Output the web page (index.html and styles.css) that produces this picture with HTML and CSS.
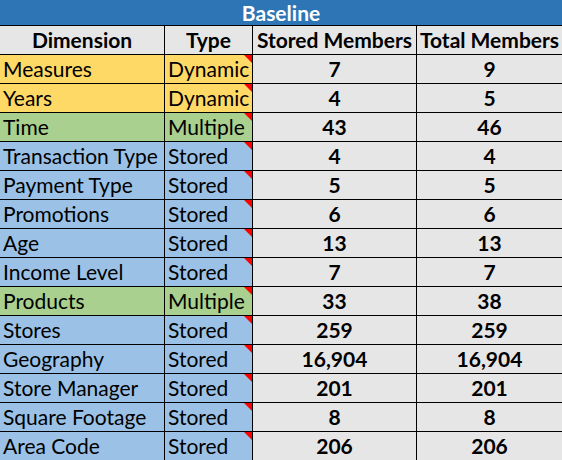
FILE: index.html
```html
<!DOCTYPE html>
<html>
<head>
<meta charset="utf-8">
<link rel="stylesheet" href="styles.css">
</head>
<body>
<div class="sheet">
  <div class="title">Baseline</div>
  <div class="cell head">Dimension</div>
  <div class="cell head">Type</div>
  <div class="cell head">Stored Members</div>
  <div class="cell head">Total Members</div>

  <div class="cell dim dyn">Measures</div><div class="cell type dyn">Dynamic</div><div class="cell num">7</div><div class="cell num">9</div>
  <div class="cell dim dyn">Years</div><div class="cell type dyn">Dynamic</div><div class="cell num">4</div><div class="cell num">5</div>
  <div class="cell dim mul">Time</div><div class="cell type mul">Multiple</div><div class="cell num">43</div><div class="cell num">46</div>
  <div class="cell dim sto">Transaction Type</div><div class="cell type sto">Stored</div><div class="cell num">4</div><div class="cell num">4</div>
  <div class="cell dim sto">Payment Type</div><div class="cell type sto">Stored</div><div class="cell num">5</div><div class="cell num">5</div>
  <div class="cell dim sto">Promotions</div><div class="cell type sto">Stored</div><div class="cell num">6</div><div class="cell num">6</div>
  <div class="cell dim sto">Age</div><div class="cell type sto">Stored</div><div class="cell num">13</div><div class="cell num">13</div>
  <div class="cell dim sto">Income Level</div><div class="cell type sto">Stored</div><div class="cell num">7</div><div class="cell num">7</div>
  <div class="cell dim mul">Products</div><div class="cell type mul">Multiple</div><div class="cell num">33</div><div class="cell num">38</div>
  <div class="cell dim sto">Stores</div><div class="cell type sto">Stored</div><div class="cell num">259</div><div class="cell num">259</div>
  <div class="cell dim sto">Geography</div><div class="cell type sto">Stored</div><div class="cell num">16,904</div><div class="cell num">16,904</div>
  <div class="cell dim sto">Store Manager</div><div class="cell type sto">Stored</div><div class="cell num">201</div><div class="cell num">201</div>
  <div class="cell dim sto">Square Footage</div><div class="cell type sto">Stored</div><div class="cell num">8</div><div class="cell num">8</div>
  <div class="cell dim sto">Area Code</div><div class="cell type sto">Stored</div><div class="cell num">206</div><div class="cell num">206</div>
</div>
</body>
</html>
```

FILE: styles.css
```css
html, body {
  margin: 0;
  padding: 0;
  background: #e7e6e6;
}
body {
  font-family: "Lato", "Liberation Sans", sans-serif;
  font-size: 21px;
  color: #000;
}
.sheet {
  display: grid;
  grid-template-columns: 164px 87px 163px 145px;
  grid-template-rows: 25px;
  grid-auto-rows: 28px;
  column-gap: 1px;
  row-gap: 1px;
  background: #000;
  width: 562px;
  height: 460px;
  overflow: hidden;
}
.title {
  grid-column: 1 / -1;
  background: #2e75b6;
  color: #fff;
  font-weight: bold;
  text-align: center;
  line-height: 25px;
}
.cell {
  background: #e7e6e6;
  line-height: 28px;
  white-space: nowrap;
  overflow: hidden;
  position: relative;
}
.head {
  font-weight: bold;
  text-align: center;
}
.dim, .type {
  padding-left: 3px;
}
.num {
  font-weight: bold;
  text-align: center;
}
.dyn { background: #ffd966; }
.mul { background: #a9d08e; }
.sto { background: #9bc2e6; }
.type::after {
  content: "";
  position: absolute;
  top: 0;
  right: 0;
  border-top: 8px solid #ff0000;
  border-left: 8px solid transparent;
}
```
